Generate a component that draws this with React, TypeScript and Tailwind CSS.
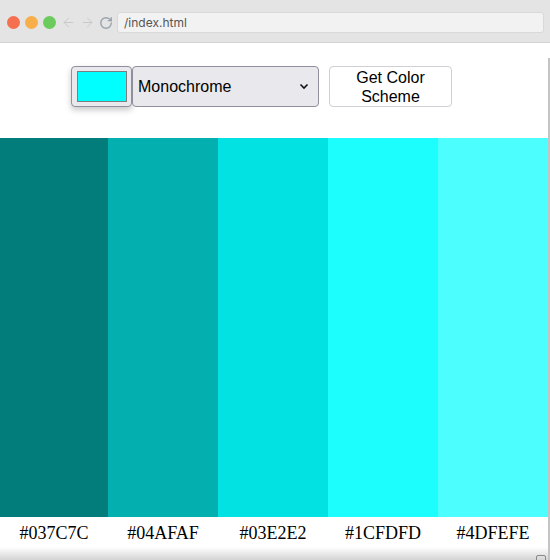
import { ArrowLeft, ArrowRight, RotateCw } from "lucide-react";

const colors = ["#037C7C", "#04AFAF", "#03E2E2", "#1CFDFD", "#4DFEFE"];

// ─── Barra del navegador ───────────────────────────────────────────────
function BrowserBar() {
  return (
    <div className="h-[43px] flex items-center bg-[#e4e4e4] border-b border-[#d4d4d4] pl-[7px] pt-[3px] shrink-0">
      <div className="flex items-center gap-[5px]">
        <span className="w-[13px] h-[13px] rounded-full bg-[#f4704f]" />
        <span className="w-[13px] h-[13px] rounded-full bg-[#f8ae4a]" />
        <span className="w-[13px] h-[13px] rounded-full bg-[#6bcb5c]" />
      </div>
      <div className="flex items-center gap-[4px] ml-[5px] text-[#c9c9c9]">
        <ArrowLeft className="w-[15px] h-[15px]" strokeWidth={1.6} />
        <ArrowRight className="w-[15px] h-[15px]" strokeWidth={1.6} />
        <RotateCw className="w-[14px] h-[14px] text-[#9aa3ab]" strokeWidth={2.4} />
      </div>
      <div
        className="ml-[4px] flex-1 h-[21px] mr-[6px] rounded-[3px] bg-[#f2f2f2] border border-[#d9d9d9] flex items-center px-[6px] text-[12px] text-[#555]"
        style={{ fontFamily: "Inter, 'Liberation Sans', sans-serif" }}
      >
        /index.html
      </div>
    </div>
  );
}

// ─── Controles ─────────────────────────────────────────────────────────
function Controls() {
  return (
    <div
      className="h-[95px] flex items-start pt-[23px] pl-[71px] text-[16px] text-black"
      style={{ fontFamily: "'Liberation Sans', Arial, sans-serif" }}
    >
      <div className="w-[61px] h-[41px] rounded-[4px] bg-[#e9e9ed] border border-[#8f8f9d] shadow-[0_3px_6px_rgba(0,0,0,0.22)] flex items-center justify-center">
        <div className="w-[50px] h-[31px] bg-[#00ffff] border border-[#7d7d7d]" />
      </div>
      <div className="w-[187px] h-[41px] rounded-[4px] bg-[#e9e9ed] border border-[#8f8f9d] flex items-center justify-between pl-[5px] pr-[9px]">
        <span>Monochrome</span>
        <svg width="10" height="7" viewBox="0 0 10 7" fill="none">
          <path d="M1.5 1.5 L5 5 L8.5 1.5" stroke="#111" strokeWidth="1.6" />
        </svg>
      </div>
      <button className="ml-[10px] w-[123px] h-[41px] rounded-[4px] bg-white border border-[#d0d0d4] leading-[19px] text-center">
        Get Color
        <br />
        Scheme
      </button>
    </div>
  );
}

export default function App() {
  return (
    <div className="w-[550px] h-[560px] overflow-hidden bg-white flex flex-col">
      <BrowserBar />
      <div className="flex flex-1 min-h-0">
        <div className="w-[548px] flex flex-col">
          <Controls />
          <div className="h-[379px] grid grid-cols-[108px_110px_110px_110px_110px]">
            {colors.map(c => (
              <div key={c} style={{ backgroundColor: c }} />
            ))}
          </div>
          <div
            className="h-[30px] pt-[2px] grid grid-cols-[108px_110px_110px_110px_110px] text-[18px] text-black"
            style={{ fontFamily: "'Liberation Serif', 'Times New Roman', serif" }}
          >
            {colors.map(c => (
              <div key={c} className="flex items-center justify-center">
                {c}
              </div>
            ))}
          </div>
          <div className="flex-1 bg-gradient-to-b from-white to-[#d4d4d4]" />
        </div>
        <div className="w-[2px] flex flex-col">
          <div className="h-[15px] bg-white" />
          <div className="flex-1 bg-[#c4c4c4]" />
        </div>
      </div>
      <div className="relative">
        <div className="absolute right-[4px] bottom-[-3px] w-[10px] h-[8px] rounded-[2px] border border-[#888]" />
      </div>
    </div>
  );
}
